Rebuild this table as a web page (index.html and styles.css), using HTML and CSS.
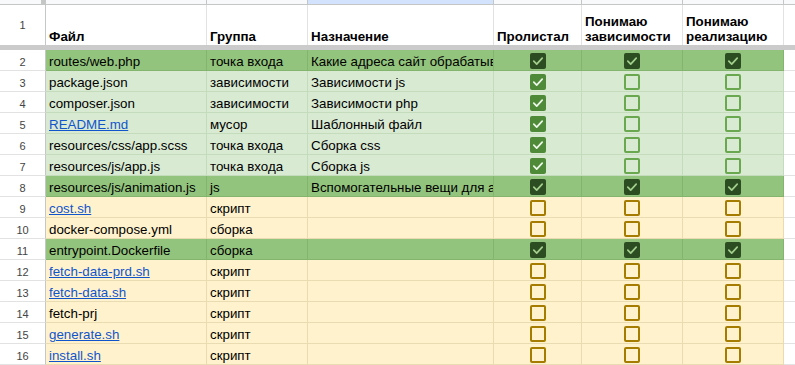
FILE: index.html
```html
<!DOCTYPE html>
<html lang="ru">
<head>
<meta charset="utf-8">
<link rel="stylesheet" href="styles.css">
</head>
<body>
<div class="sheet">
  <div class="row colhead">
    <div class="corner"></div><div class="ch"></div><div class="ch"></div><div class="ch sel"></div><div class="ch"></div><div class="ch"></div><div class="ch"></div><div class="ch last"></div>
  </div>
  <div class="row head">
    <div class="rh">1</div>
    <div class="hc">Файл</div>
    <div class="hc">Группа</div>
    <div class="hc">Назначение</div>
    <div class="hc">Пролистал</div>
    <div class="hc">Понимаю<br>зависимости</div>
    <div class="hc">Понимаю<br>реализацию</div>
    <div class="hc last"></div>
  </div>
  <div class="band"></div>
  <div id="rows"></div>
</div>
<script src="app.js"></script>
</body>
</html>
```

FILE: app.js
```js
const data = [
  ["dg","routes/web.php",0,"точка входа","Какие адреса сайт обрабатывает",[1,1,1]],
  ["lg","package.json",0,"зависимости","Зависимости js",[1,0,0]],
  ["lg","composer.json",0,"зависимости","Зависимости php",[1,0,0]],
  ["lg","README.md",1,"мусор","Шаблонный файл",[1,0,0]],
  ["lg","resources/css/app.scss",0,"точка входа","Сборка css",[1,0,0]],
  ["lg","resources/js/app.js",0,"точка входа","Сборка js",[1,0,0]],
  ["dg","resources/js/animation.js",0,"js","Вспомогательные вещи для анимации",[1,1,1]],
  ["y","cost.sh",1,"скрипт","",[0,0,0]],
  ["y","docker-compose.yml",0,"сборка","",[0,0,0]],
  ["dg","entrypoint.Dockerfile",0,"сборка","",[1,1,1]],
  ["y","fetch-data-prd.sh",1,"скрипт","",[0,0,0]],
  ["y","fetch-data.sh",1,"скрипт","",[0,0,0]],
  ["y","fetch-prj",0,"скрипт","",[0,0,0]],
  ["y","generate.sh",1,"скрипт","",[0,0,0]],
  ["y","install.sh",1,"скрипт","",[0,0,0]]
];
const check = '<svg width="16" height="16" viewBox="0 0 16 16"><path d="M3.8 8.2 L6.7 11.1 L12.2 5.2" fill="none" stroke-width="1.7" stroke-linecap="round" stroke-linejoin="round"/></svg>';
let html = "";
data.forEach((r, i) => {
  const [cls, file, link, group, desc, checks] = r;
  html += '<div class="row data ' + cls + '">';
  html += '<div class="rh">' + (i + 2) + '</div>';
  html += '<div class="c">' + (link ? '<span class="link">' + file + '</span>' : file) + '</div>';
  html += '<div class="c">' + group + '</div>';
  html += '<div class="c">' + desc + '</div>';
  checks.forEach(v => {
    html += '<div class="c cb"><span class="box' + (v ? ' on' : '') + '">' + (v ? check : '') + '</span></div>';
  });
  html += '<div class="c last"></div></div>';
});
document.getElementById("rows").innerHTML = html;
```

FILE: styles.css
```css
html, body {
  margin: 0;
  padding: 0;
  background: #fff;
  overflow: hidden;
}
body {
  font-family: "Liberation Sans", Arial, sans-serif;
  font-size: 13.33px;
  color: #000;
}
.sheet {
  width: 795px;
  height: 365px;
  overflow: hidden;
}
.row {
  display: grid;
  grid-template-columns: 46px 161px 101px 186px 88px 101px 101px 11px;
}
.row > div {
  box-sizing: border-box;
  overflow: hidden;
  white-space: nowrap;
}
.colhead {
  height: 5px;
}
.corner {
  background: #f8f9fa;
  border-right: 5px solid #c4c7c5;
  border-bottom: 1px solid #c4c7c5;
}
.ch {
  background: #f8f9fa;
  border-right: 1px solid #c4c7c5;
  border-bottom: 1px solid #c4c7c5;
}
.ch.sel {
  background: #d3e3fd;
}
.ch.last {
  border-right: none;
}
.head {
  height: 40px;
}
.rh {
  border-right: 1px solid #c4c7c5;
  border-bottom: 1px solid #e2e2e2;
  background: #fff;
  color: #444;
  font-size: 11px;
  display: flex;
  align-items: center;
  justify-content: center;
}
.data .rh {
  padding-top: 3px;
}
.head .rh {
  border-bottom: none;
}
.hc {
  border-right: 1px solid #e2e2e2;
  font-weight: bold;
  line-height: 15px;
  padding: 0 3px 1px;
  display: flex;
  align-items: flex-end;
}
.hc.last {
  border-right: none;
}
.band {
  height: 5px;
  background: #cbcbcb;
}
.data {
  height: 21px;
}
.c {
  border-right: 1px solid #e2e2e2;
  border-bottom: 1px solid #e2e2e2;
  padding: 0 3px 1px;
  line-height: 15px;
  display: flex;
  align-items: flex-end;
}
.c.last {
  background: #fff;
  border-right: none;
  border-bottom: 1px solid #e2e2e2;
}
.link {
  color: #1155cc;
  text-decoration: underline;
}
.dg .c { background: #93c47d; border-color: #84b56e; }
.lg .c { background: #d9ead3; border-color: #c4dbbc; }
.y .c { background: #fff2cc; border-color: #eadcb2; }
.row .c.last { background: #fff; border-color: #e2e2e2; }
.cb {
  align-items: center;
  justify-content: center;
  padding: 2px 0 0;
}
.box {
  width: 16px;
  height: 16px;
  box-sizing: border-box;
  border-radius: 2px;
  border: 2px solid;
  display: block;
}
.box svg {
  display: block;
}
.box.on {
  border: none;
}
.lg .box { border-color: #6aa84f; }
.y .box { border-color: #a67c00; }
.lg .box.on { background: #4e8a38; }
.dg .box.on { background: #2c4d22; }
.lg .box.on svg { stroke: #eef6ea; }
.dg .box.on svg { stroke: #a3cf8d; }
```
